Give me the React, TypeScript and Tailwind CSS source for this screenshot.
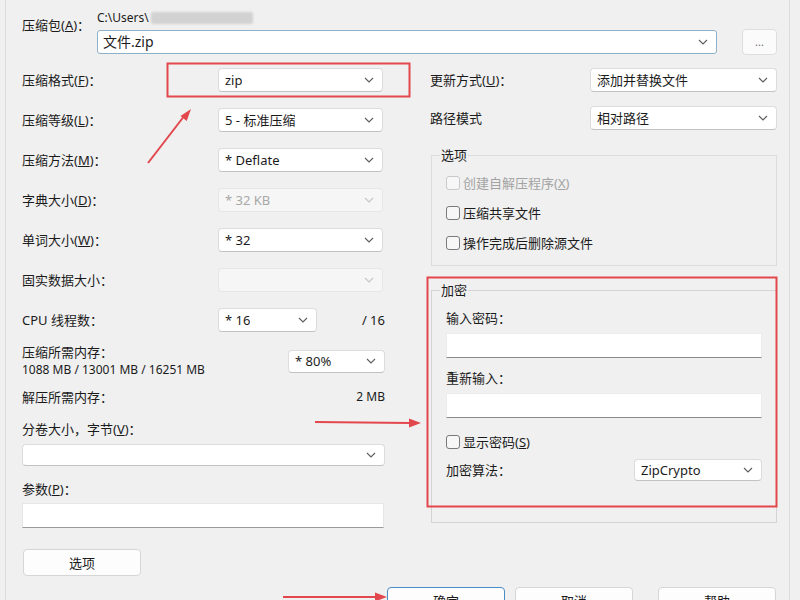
import clsx from "clsx";
import type { ReactNode } from "react";

const Chevron = ({ disabled }: { disabled?: boolean }) => (
  <svg width="10" height="6" viewBox="0 0 10 6" className="shrink-0">
    <path d="M1 1l4 4 4-4" fill="none" stroke={disabled ? "#c6c6c6" : "#5c5c5c"} strokeWidth="1.1" />
  </svg>
);

const Select = ({ value, className, disabled }: { value?: string; className: string; disabled?: boolean }) => (
  <div
    className={clsx(
      "flex items-center justify-between rounded-[4px] border pl-[6px] pr-[8px]",
      disabled ? "border-[#e6e6e6] bg-[#f6f6f6] text-[#a8a8a8]" : "border-[#dcdcdc] border-b-[#c2c2c2] bg-white text-[#1b1b1b]",
      className
    )}
  >
    <span className="truncate">{value}</span>
    <Chevron disabled={disabled} />
  </div>
);

const Check = ({ children, disabled }: { children: ReactNode; disabled?: boolean }) => (
  <div className={clsx("flex h-5 items-center", disabled && "text-[#a3a3a3]")}>
    <span
      className={clsx(
        "h-[14px] w-[14px] shrink-0 rounded-[3px] border bg-[#f7f7f7]",
        disabled ? "border-[#c9c9c9]" : "border-[#7a7a7a]"
      )}
    />
    <span className="ml-[3px]">{children}</span>
  </div>
);

const Row = ({ label, children }: { label: ReactNode; children: ReactNode }) => (
  <div className="flex h-6 items-center">
    <div className="w-[196px] shrink-0">{label}</div>
    {children}
  </div>
);

const RightRow = ({ label, children }: { label: ReactNode; children: ReactNode }) => (
  <div className="flex h-6 items-center">
    <div className="w-[160px] shrink-0">{label}</div>
    {children}
  </div>
);

const Annotations = () => (
  <svg width="800" height="600" viewBox="0 0 800 600" className="pointer-events-none absolute left-0 top-0">
    <g stroke="#e2474d" fill="none" strokeWidth="2">
      <rect x="167.5" y="63.5" width="242" height="33" />
      <rect x="427.5" y="277.5" width="349" height="229" />
      <path d="M148 163L185 115" />
      <path d="M315 422L410 423" />
      <path d="M283 597L376 597" />
    </g>
    <g fill="#e2474d">
      <path d="M191 109L186.7 120.9L180.5 115.9Z" />
      <path d="M421 423L409 418.5L409 427.5Z" />
      <path d="M387 597L375 592.5L375 601.5Z" />
    </g>
  </svg>
);

export default function App() {
  return (
    <div className="relative h-[600px] w-[800px] overflow-hidden bg-[#f0f0f0] font-['Noto_Sans','Noto_Sans_CJK_SC',sans-serif] text-[13px] leading-[18px] text-[#1b1b1b]">
      <div className="ml-[5px] h-full w-[785px] border-x border-[#dadada] pl-[16px]">
        {/* archive path */}
        <div className="flex h-[68px] pt-[10px]">
          <div className="mt-[6px] w-[75px] shrink-0">
            压缩包(<u>A</u>)：
          </div>
          <div className="flex flex-col">
            <div className="flex h-4 items-center text-[12px] leading-4">
              C:\Users\
              <span className="ml-[2px] h-[12px] w-[102px] rounded-[2px] bg-[#d2d2d2] blur-[1px]" />
            </div>
            <div className="mt-[3px] flex items-center gap-[25px]">
              <div className="flex h-[24px] w-[620px] items-center justify-between rounded-[3px] border border-[#8eb1ca] bg-white pl-[5px] pr-[8px] text-[14px]">
                <span>文件.zip</span>
                <Chevron />
              </div>
              <div className="flex h-[26px] w-[35px] items-center justify-center rounded-[4px] border border-[#dedede] bg-[#fbfbfb] text-[11px] text-[#6a6a6a]">
                ...
              </div>
            </div>
          </div>
        </div>

        <div className="flex">
          {/* left column */}
          <div className="flex w-[363px] shrink-0 flex-col">
            <div className="flex flex-col gap-4">
              <Row label={<>压缩格式(<u>F</u>)：</>}>
                <Select value="zip" className="h-6 w-[165px]" />
              </Row>
              <Row label={<>压缩等级(<u>L</u>)：</>}>
                <Select value="5 - 标准压缩" className="h-6 w-[165px]" />
              </Row>
              <Row label={<>压缩方法(<u>M</u>)：</>}>
                <Select value="* Deflate" className="h-6 w-[165px]" />
              </Row>
              <Row label={<>字典大小(<u>D</u>)：</>}>
                <Select value="* 32 KB" className="h-6 w-[165px]" disabled />
              </Row>
              <Row label={<>单词大小(<u>W</u>)：</>}>
                <Select value="* 32" className="h-6 w-[165px]" />
              </Row>
              <Row label="固实数据大小：">
                <Select className="h-6 w-[165px]" disabled />
              </Row>
              <Row label="CPU 线程数：">
                <Select value="* 16" className="h-6 w-[99px]" />
                <span className="ml-auto">/ 16</span>
              </Row>
            </div>

            <div className="mt-[11px] flex items-center justify-between">
              <div>
                <div>压缩所需内存：</div>
                <div className="text-[12px]">1088 MB / 13001 MB / 16251 MB</div>
              </div>
              <Select value="* 80%" className="h-[23px] w-[97px]" />
            </div>

            <div className="mt-[9px] flex justify-between">
              <span>解压所需内存：</span>
              <span className="text-[12px]">2 MB</span>
            </div>

            <div className="mt-[14px]">
              分卷大小，字节(<u>V</u>)：
            </div>
            <Select className="mt-[6px] h-[22px] w-[363px] rounded-[2px] border-[#a9a9a9]" />

            <div className="mt-[14px]">
              参数(<u>P</u>)：
            </div>
            <div className="mt-[5px] h-[25px] w-[362px] border border-[#e6e6e6] border-b-[#9a9a9a] bg-white" />

            <div className="ml-[1px] mt-[21px] flex h-[27px] w-[118px] items-center justify-center rounded-[4px] border border-[#d6d6d6] bg-[#fdfdfd]">
              选项
            </div>
          </div>

          {/* right column */}
          <div className="ml-[45px] flex w-[347px] flex-col">
            <RightRow label={<>更新方式(<u>U</u>)：</>}>
              <Select value="添加并替换文件" className="h-6 w-[187px]" />
            </RightRow>
            <div className="mt-[14px]">
              <RightRow label="路径模式">
                <Select value="相对路径" className="h-6 w-[187px]" />
              </RightRow>
            </div>

            <fieldset className="ml-[1px] mt-[16px] w-[346px] border border-[#dcdcdc] pb-[12px] pl-[14px]">
              <legend className="-ml-[6px] px-[1px]">选项</legend>
              <div className="mt-[9px] flex flex-col gap-[10px]">
                <Check disabled>
                  创建自解压程序(<u>X</u>)
                </Check>
                <Check>压缩共享文件</Check>
                <Check>操作完成后删除源文件</Check>
              </div>
            </fieldset>

            <fieldset className="ml-[1px] mt-[15px] w-[346px] border border-[#d4d4d4] pb-[41px] pl-[14px]">
              <legend className="-ml-[6px] px-[1px]">加密</legend>
              <div className="mt-[10px]">输入密码：</div>
              <div className="mt-[6px] h-[25px] w-[316px] border border-[#ececec] border-b-[#8a8a8a] bg-white" />
              <div className="mt-[11px]">重新输入：</div>
              <div className="mt-[6px] h-[25px] w-[316px] border border-[#ececec] border-b-[#8a8a8a] bg-white" />
              <div className="mt-[14px]">
                <Check>
                  显示密码(<u>S</u>)
                </Check>
              </div>
              <div className="mt-[7px] flex w-[316px] items-center justify-between">
                <span>加密算法：</span>
                <Select value="ZipCrypto" className="h-[22px] w-[128px]" />
              </div>
            </fieldset>
          </div>
        </div>

        {/* dialog buttons */}
        <div className="ml-[365px] mt-[11px] flex">
          <div className="flex h-[27px] w-[118px] items-center justify-center rounded-[4px] border border-[#4a8cc4] bg-[#fdfdfd]">
            确定
          </div>
          <div className="ml-[10px] flex h-[27px] w-[118px] items-center justify-center rounded-[4px] border border-[#d6d6d6] bg-[#fdfdfd]">
            取消
          </div>
          <div className="ml-[25px] flex h-[27px] w-[118px] items-center justify-center rounded-[4px] border border-[#d6d6d6] bg-[#fdfdfd]">
            帮助
          </div>
        </div>
      </div>
      <Annotations />
    </div>
  );
}
